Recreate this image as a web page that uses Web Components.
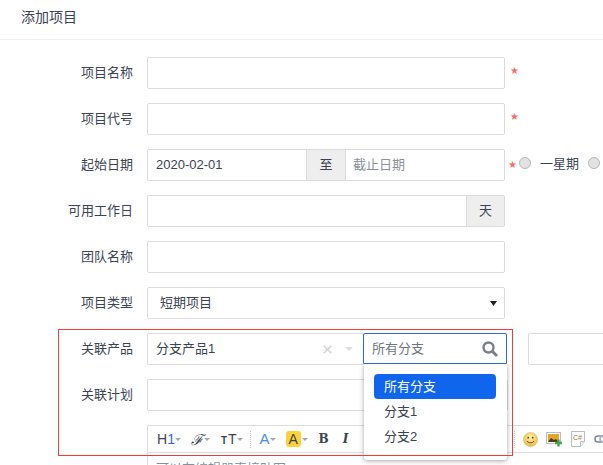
<!DOCTYPE html>
<html lang="zh">
<head>
<meta charset="utf-8">
<title>添加项目</title>
<style>
html, body { margin: 0; height: 465px; overflow: hidden; background: #fff; }
body { font: 13px/20px "Liberation Sans", "Noto Sans CJK SC", sans-serif; color: #3c4353; }
</style>
</head>
<body>
<page-shell>
  <page-title slot="title">添加项目</page-title>

  <form-row label="项目名称"><text-box></text-box><req-star></req-star></form-row>
  <form-row label="项目代号"><text-box></text-box><req-star></req-star></form-row>
  <form-row label="起始日期">
    <date-range start="2020-02-01" end="截止日期"></date-range>
    <req-star tight></req-star>
    <radio-opt>一星期</radio-opt>
    <radio-opt></radio-opt>
  </form-row>
  <form-row label="可用工作日"><text-box addon="天"></text-box></form-row>
  <form-row label="团队名称"><text-box></text-box></form-row>
  <form-row label="项目类型"><select-box>短期项目</select-box></form-row>
  <form-row label="关联产品">
    <product-select>分支产品1</product-select>
    <branch-picker></branch-picker>
    <text-box style="width:120px;margin-left:21px;flex:none"></text-box>
  </form-row>
  <form-row label="关联计划"><text-box style="width:361px"></text-box></form-row>
  <form-row label=""><editor-box>可以在编辑器直接贴图。</editor-box></form-row>

  <mark-box></mark-box>
</page-shell>

<script>
function define(name, html, props) {
  const tpl = document.createElement("template");
  tpl.innerHTML = html;
  customElements.define(name, class extends HTMLElement {
    constructor() {
      super();
      this.attachShadow({mode: "open"}).appendChild(tpl.content.cloneNode(true));
    }
    connectedCallback() {
      if (props) props(this.shadowRoot, this);
    }
  });
}

define("page-shell", `
  <style>
    :host { display: block; position: relative; height: 465px; overflow: hidden; }
    main { display: flex; flex-direction: column; gap: 14px; padding-top: 17px; width: 800px; }
  </style>
  <slot name="title"></slot>
  <main><slot></slot></main>
`);

define("page-title", `
  <style>
    :host { display: block; height: 39px; padding-left: 21px; border-bottom: 1px solid #eee;
      font-size: 14px; line-height: 35px; color: #3c4353; }
  </style>
  <slot></slot>
`);

define("form-row", `
  <style>
    :host { display: grid; grid-template-columns: 133px 1fr; column-gap: 14px; align-items: start; }
    label { text-align: right; line-height: 31px; white-space: nowrap; }
    div { display: flex; align-items: flex-start; min-height: 32px; }
  </style>
  <label></label>
  <div><slot></slot></div>
`, (root, el) => { root.querySelector("label").textContent = el.getAttribute("label"); });

define("text-box", `
  <style>
    :host { display: flex; width: 358px; height: 32px; box-sizing: border-box; border: 1px solid #dcdcdc; border-radius: 2px; background: #fff; flex: none; }
    span { flex: 1; }
    b { font-weight: normal; width: 37px; background: #eee; border-left: 1px solid #dcdcdc; text-align: center; line-height: 30px; }
  </style>
  <span></span>
`, (root, el) => {
  const addon = el.getAttribute("addon");
  if (addon) {
    const b = document.createElement("b");
    b.textContent = addon;
    root.appendChild(b);
  }
});

define("req-star", `
  <style>
    :host { display: block; margin-left: 5px; width: 7px; height: 32px; flex: none; overflow: visible;
      color: #ff6b6b; font: 10px/28px "DejaVu Sans", sans-serif; }
    :host([tight]) { margin-left: 3px; line-height: 31px; }
  </style>
  ★
`);

define("date-range", `
  <style>
    :host { display: flex; width: 358px; height: 32px; box-sizing: border-box; border: 1px solid #dcdcdc; border-radius: 2px; flex: none; line-height: 30px; }
    .start { width: 158px; padding-left: 8px; box-sizing: border-box; font-size: 13px; }
    .to { width: 38px; background: #eee; border-left: 1px solid #dcdcdc; border-right: 1px solid #dcdcdc; text-align: center; }
    .end { flex: 1; padding-left: 7px; color: #8b8f99; }
  </style>
  <span class="start"></span><span class="to">至</span><span class="end"></span>
`, (root, el) => {
  root.querySelector(".start").textContent = el.getAttribute("start");
  root.querySelector(".end").textContent = el.getAttribute("end");
});

define("radio-opt", `
  <style>
    :host { display: inline-flex; align-items: center; height: 30px; margin-left: 4px; flex: none; margin-right: 5px; }
    i { width: 12px; height: 12px; box-sizing: border-box; border-radius: 50%; border: 1.500px solid #b8b8b8; background: #e2e2e2; margin: -2px 9px 0 0; }
  </style>
  <i></i><slot></slot>
`);

define("select-box", `
  <style>
    :host { display: flex; align-items: center; justify-content: space-between; width: 358px; height: 32px; box-sizing: border-box;
      border: 1px solid #dcdcdc; border-radius: 2px; padding: 0 7px 0 12px; flex: none; }
    svg { display: block; }
  </style>
  <slot></slot>
  <svg width="7" height="5" viewBox="0 0 7 5"><path d="M0 0h7L3.500 5z" fill="#222"/></svg>
`);

define("product-select", `
  <style>
    :host { display: flex; align-items: center; width: 218px; height: 32px; box-sizing: border-box; flex: none;
      border: 1px solid #dcdcdc; border-radius: 2px; padding-left: 8px; }
    span { flex: 1; }
    svg { display: block; }
    .x { margin-right: 13px; }
    .c { margin-right: 11px; }
  </style>
  <span><slot></slot></span>
  <svg class="x" width="9" height="9" viewBox="0 0 9 9"><path d="M.7.7l7.600 7.600M8.300.7L.7 8.300" stroke="#d4d4d4" stroke-width="1.600"/></svg>
  <svg class="c" width="8" height="4" viewBox="0 0 8 4"><path d="M0 0h8L4 4z" fill="#ddd"/></svg>
`);

define("branch-picker", `
  <style>
    :host { display: block; position: relative; width: 144px; height: 32px; margin-left: -2px; flex: none; z-index: 2; }
    .search { display: flex; align-items: center; justify-content: space-between; height: 31px; box-sizing: border-box;
      border: 1px solid #2a6bd6; border-radius: 2px 2px 0 0; padding: 0 8px 0 8px; color: #6f7480; background: #fff; }
    svg { display: block; }
    .panel { position: absolute; top: 31px; left: 1px; width: 143px; height: 96px; box-sizing: border-box; background: #fff;
      padding: 10px 11px 10px 10px; border-radius: 0 0 3px 3px; box-shadow: 0 1px 5px rgba(0,0,0,.35); clip-path: inset(0 -8px -8px -8px); }
    .opt { height: 25px; line-height: 25px; padding-left: 10px; border-radius: 4px; font-size: 13px; color: #3c4353; }
    .on { background: #0f66ed; color: #fff; }
  </style>
  <div class="search">所有分支
    <svg width="16" height="16" viewBox="0 0 16 16"><circle cx="6.500" cy="6.500" r="5" fill="none" stroke="#7a7f8c" stroke-width="2.400"/><path d="M10.500 10.500L15 15" stroke="#7a7f8c" stroke-width="2.800"/></svg>
  </div>
  <div class="panel">
    <div class="opt on">所有分支</div>
    <div class="opt">分支1</div>
    <div class="opt">分支2</div>
  </div>
`);

define("editor-box", `
  <style>
    :host { display: block; width: 600px; border: 1px solid #dcdcdc; border-radius: 2px; box-sizing: border-box; height: 80px; }
    .bar { display: flex; align-items: center; height: 26px; border-bottom: 1px solid #dcdcdc; color: #3c4353; padding-left: 9px; font-size: 14px; line-height: 26px; }
    .t { display: flex; align-items: center; height: 26px; flex: none; }
    .c::after { content: ""; display: block; border: 3px solid transparent; border-top: 3px solid #a5a8b0; border-bottom: 0; }
    .sep { width: 0; height: 17px; border-left: 1px dotted #c8c8c8; flex: none; }
    .a { color: #4c8cf0; font-size: 15px; }
    .y { background: #ffd23c; border-radius: 3px; width: 15px; height: 16px; line-height: 16px; text-align: center; display: block; margin-right: 1px; }
    .serif { font-family: "DejaVu Serif", "Liberation Serif", serif; font-weight: bold; font-size: 12px; }
    .body { padding: 6px 8px; color: #8b8f99; }
    svg { display: block; flex: none; }
    em { color: #2a6bd6; font-style: normal; }
    .f { display: block; width: 13px; font: italic 15px "Liberation Serif", serif; }
    small { font-size: 10px; font-weight: bold; margin: 3px 1px 0 0; }
  </style>
  <div class="bar">
    <span class="t c">H<em>1</em></span>
    <span class="t c" style="margin-left:10px"><span class="f">ℱ</span></span>
    <span class="t c" style="margin-left:11px"><small>T</small>T</span>
    <span class="sep" style="margin-left:7px"></span>
    <span class="t c a" style="margin-left:9px">A</span>
    <span class="t c" style="margin-left:10px"><span class="y">A</span></span>
    <span class="t serif" style="margin-left:11px">B</span>
    <span class="t serif" style="margin-left:14px;width:9px;font-style:italic">I</span>
    <span class="sep" style="margin-left:162px"></span>
    <svg style="margin-left:8px" width="15" height="15" viewBox="0 0 15 15"><defs><radialGradient id="f" cx=".5" cy=".35" r=".7"><stop offset="0" stop-color="#fff2a8"/><stop offset="1" stop-color="#e9b73c"/></radialGradient></defs><circle cx="7.500" cy="7.500" r="7" fill="url(#f)" stroke="#d8b25a" stroke-width=".6"/><circle cx="5.300" cy="5.700" r=".9" fill="#5a4513"/><circle cx="9.700" cy="5.700" r=".9" fill="#5a4513"/><path d="M4 9c1 2.300 6 2.300 7 0" fill="none" stroke="#5a4513"/></svg>
    <svg style="margin-left:8px" width="17" height="15" viewBox="0 0 17 15"><rect x=".5" y=".5" width="14" height="11" fill="#fff" stroke="#bbb"/><rect x="2" y="2" width="11" height="8" fill="#e8a52c"/><path d="M2 10l3-4 3 2 2-1 3 3z" fill="#4a3a20"/><path d="M13 8v7M9.500 11.500h7" stroke="#4ba34b" stroke-width="2.400" transform="translate(-.5 -.5)"/></svg>
    <svg style="margin-left:8px" width="14" height="16" viewBox="0 0 14 16"><path d="M.5.5h13v10l-4 5h-9z" fill="#fff" stroke="#bbb"/><path d="M13.500 10.500h-4v5" fill="#eee" stroke="#bbb"/><text x="2" y="8.500" font-size="7" font-family="Liberation Sans" fill="#a87a4a">C#</text></svg>
    <svg style="margin-left:9px" width="16" height="8" viewBox="0 0 16 8"><rect x="1" y="1" width="9" height="6" rx="3" fill="none" stroke="#7889a6" stroke-width="1.600"/><rect x="6" y="1" width="9" height="6" rx="3" fill="none" stroke="#9fb0c9" stroke-width="1.600"/></svg>
  </div>
  <div class="body"><slot></slot></div>
`);

define("mark-box", `
  <style>
    :host { position: absolute; left: 58px; top: 329px; width: 455px; height: 127px; box-sizing: border-box; border: 1px solid #f03c3c; z-index: 3; pointer-events: none; }
  </style>
`);
</script>
</body>
</html>
